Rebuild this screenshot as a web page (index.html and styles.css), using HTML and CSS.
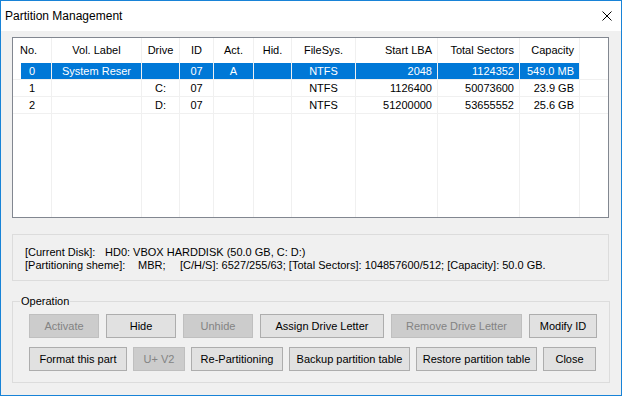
FILE: index.html
```html
<!DOCTYPE html>
<html lang="en">
  <head>
    <meta charset="UTF-8">
    <title>Partition Management</title>
    <link rel="stylesheet" href="styles.css">
  </head>

  <body>
    <div class="window">
      <div class="titlebar">
        <span class="title">Partition Management</span>
        <svg class="close" width="10" height="10" viewBox="0 0 10 10">
          <path d="M0.5 0.5 L9.5 9.5 M9.5 0.5 L0.5 9.5" stroke="#000" stroke-width="1" fill="none"/>
        </svg>
      </div>

      <div class="content">
        <div class="listview">
          <div class="lv-row lv-head">
            <div class="c no">No.</div>
            <div class="c">Vol. Label</div>
            <div class="c">Drive</div>
            <div class="c">ID</div>
            <div class="c">Act.</div>
            <div class="c">Hid.</div>
            <div class="c">FileSys.</div>
            <div class="c num">Start LBA</div>
            <div class="c num">Total Sectors</div>
            <div class="c num">Capacity</div>
            <div class="c fill"></div>
          </div>
          <div class="lv-row item selected">
            <div class="c first">0</div>
            <div class="c">System Reser</div>
            <div class="c"></div>
            <div class="c">07</div>
            <div class="c">A</div>
            <div class="c"></div>
            <div class="c">NTFS</div>
            <div class="c num">2048</div>
            <div class="c num">1124352</div>
            <div class="c num">549.0 MB</div>
            <div class="c fill"></div>
          </div>
          <div class="lv-row item">
            <div class="c first">1</div>
            <div class="c"></div>
            <div class="c">C:</div>
            <div class="c">07</div>
            <div class="c"></div>
            <div class="c"></div>
            <div class="c">NTFS</div>
            <div class="c num">1126400</div>
            <div class="c num">50073600</div>
            <div class="c num">23.9 GB</div>
            <div class="c fill"></div>
          </div>
          <div class="lv-row item">
            <div class="c first">2</div>
            <div class="c"></div>
            <div class="c">D:</div>
            <div class="c">07</div>
            <div class="c"></div>
            <div class="c"></div>
            <div class="c">NTFS</div>
            <div class="c num">51200000</div>
            <div class="c num">53655552</div>
            <div class="c num">25.6 GB</div>
            <div class="c fill"></div>
          </div>
          <div class="lv-row lv-rest">
            <div class="c"></div>
            <div class="c"></div>
            <div class="c"></div>
            <div class="c"></div>
            <div class="c"></div>
            <div class="c"></div>
            <div class="c"></div>
            <div class="c"></div>
            <div class="c"></div>
            <div class="c"></div>
            <div class="c fill"></div>
          </div>
        </div>

        <div class="info">
          <div><span class="key-disk">[Current Disk]:</span>HD0: VBOX HARDDISK (50.0 GB, C: D:)</div>
          <div><span class="key-scheme">[Partitioning sheme]:</span><span class="key-mbr">MBR;</span>[C/H/S]: 6527/255/63; [Total Sectors]: 104857600/512; [Capacity]: 50.0 GB.</div>
        </div>

        <fieldset class="ops">
          <legend>Operation</legend>
          <div class="btn-row row1">
            <button class="btn w70" disabled>Activate</button>
            <button class="btn w70">Hide</button>
            <button class="btn w70" disabled>Unhide</button>
            <button class="btn w124">Assign Drive Letter</button>
            <button class="btn w131" disabled>Remove Drive Letter</button>
            <button class="btn w68">Modify ID</button>
          </div>
          <div class="btn-row row2">
            <button class="btn w98">Format this part</button>
            <button class="btn w52" disabled>U+ V2</button>
            <button class="btn w92">Re-Partitioning</button>
            <button class="btn w121">Backup partition table</button>
            <button class="btn w121">Restore partition table</button>
            <button class="btn w53">Close</button>
          </div>
        </fieldset>
      </div>
    </div>
  </body>
</html>
```

FILE: styles.css
```css
* {
  margin: 0;
  padding: 0;
  box-sizing: border-box;
}

html,
body {
  width: 622px;
  height: 396px;
  overflow: hidden;
}

body {
  font-family: "Liberation Sans", Arial, sans-serif;
  font-size: 11px;
  color: #000;
  background-color: #f0f0f0;
}

.window {
  width: 622px;
  height: 396px;
  border: 1px solid #1883d7;
  background-color: #f0f0f0;
  display: flex;
  flex-direction: column;
}

.titlebar {
  height: 30px;
  background-color: #fff;
  display: flex;
  align-items: center;
  justify-content: space-between;
  padding-left: 4px;
  padding-right: 9px;
  font-size: 12px;
}

.content {
  flex: 1;
  padding: 6px 12px 0 11px;
}

/* list view */
.listview {
  height: 181px;
  border: 1px solid #828790;
  background-color: #fff;
  display: flex;
  flex-direction: column;
}

.lv-row {
  display: grid;
  grid-template-columns: 39px 90px 38px 34px 40px 38px 64px 82px 82px 60px 1fr;
}

.lv-head {
  height: 25px;
}

.item {
  height: 17px;
  border-bottom: 1px solid #f0f0f0;
}

.lv-rest {
  flex: 1;
}

.c {
  border-right: 1px solid #f0f0f0;
  text-align: center;
  white-space: nowrap;
  overflow: hidden;
  line-height: 16px;
}

.lv-head .c {
  line-height: 24px;
}

.lv-head .no {
  text-align: left;
  padding-left: 7px;
}

.c.num {
  text-align: right;
  padding-right: 5px;
}

.c.fill {
  border-right: none;
}

.selected .c {
  background-color: #0078d7;
  color: #fff;
}

.selected .c.first {
  background: linear-gradient(to right, #fff 8px, #0078d7 8px);
}

.selected .c.fill {
  background: #fff;
}

/* disk info */
.info {
  margin-top: 16px;
  height: 47px;
  border: 1px solid #dcdcdc;
  padding: 11px 12px 0 12px;
  line-height: 13px;
  white-space: nowrap;
}

.key-disk {
  display: inline-block;
  width: 80px;
}

.key-scheme {
  display: inline-block;
  width: 113px;
}

.key-mbr {
  display: inline-block;
  width: 42px;
}

/* operation group */
.ops {
  margin-top: 13px;
  border: 1px solid #dcdcdc;
  padding: 6px 12px 11px 16px;
}

.ops legend {
  margin-left: -9px;
  padding: 0 1px;
  line-height: 14px;
}

.btn-row {
  display: flex;
}

.row1 {
  gap: 7px;
}

.row2 {
  gap: 6px;
  margin-top: 9px;
}

.btn {
  height: 24px;
  font-family: inherit;
  font-size: 11px;
  color: #000;
  background-color: #e1e1e1;
  border: 1px solid #adadad;
}

.btn:disabled {
  background-color: #cccccc;
  border-color: #bfbfbf;
  color: #838383;
}

.w52 { width: 52px; }
.w53 { width: 53px; }
.w68 { width: 68px; }
.w70 { width: 70px; }
.w92 { width: 92px; }
.w98 { width: 98px; }
.w121 { width: 121px; }
.w124 { width: 124px; }
.w131 { width: 131px; }
```
